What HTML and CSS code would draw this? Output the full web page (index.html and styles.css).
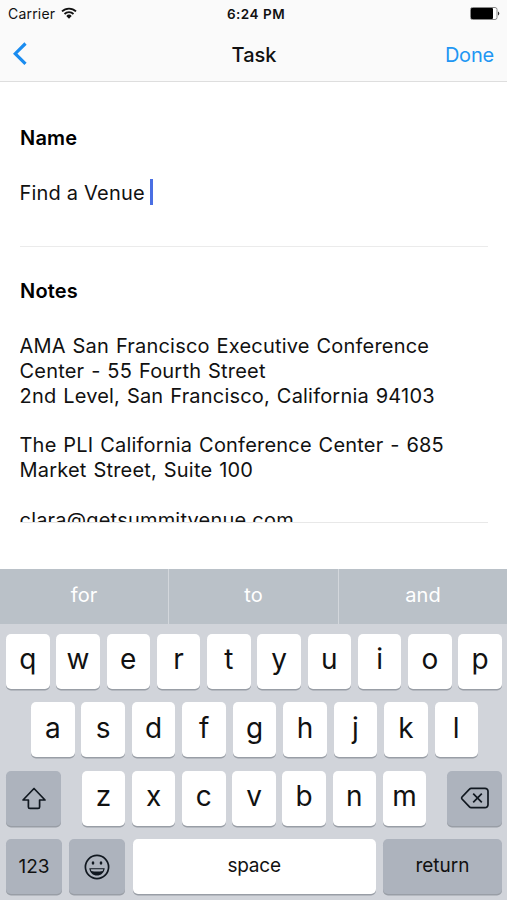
FILE: index.html
```html
<!DOCTYPE html>
<html lang="en">
<head>
  <meta charset="UTF-8">
  <title>Task</title>
  <meta name="viewport" content="width=device-width, initial-scale=1.0">
  <link rel="stylesheet" href="styles.css">
</head>
<body>
  <header>
    <div class="status">
      <div class="carrier">
        <span>Carrier</span>
        <svg class="wifi" viewBox="0 0 16 12" width="16" height="12">
          <path d="M1 4.4a10 10 0 0 1 14 0M3.5 7a6.4 6.4 0 0 1 9 0" fill="none" stroke="#111" stroke-width="1.8"/>
          <path d="M5.3 8.9a3.9 3.9 0 0 1 5.4 0L8 11.7z" fill="#111"/>
        </svg>
      </div>
      <div class="time">6:24 PM</div>
      <svg class="battery" viewBox="0 0 30 13" width="30" height="13">
        <rect x="0.5" y="0.5" width="26.5" height="12" rx="2" fill="#fff" stroke="#888"/>
        <rect x="1" y="1" width="22" height="11" rx="1" fill="#000"/>
        <path d="M28 4.5a2.2 2.2 0 0 1 0 4z" fill="#333"/>
      </svg>
    </div>
    <nav>
      <svg class="back" viewBox="0 0 14 24" width="14" height="24">
        <path d="M12.5 1.5L2.2 11.7l10.3 10.2" fill="none" stroke="#1a8cf0" stroke-width="3.2"/>
      </svg>
      <h1>Task</h1>
      <a class="done">Done</a>
    </nav>
  </header>

  <main>
    <section class="name">
      <h2>Name</h2>
      <p class="field"><span>Find a Venue</span><span class="caret"></span></p>
    </section>
    <section class="notes">
      <h2>Notes</h2>
      <div class="text">AMA San Francisco Executive Conference<br>Center - 55 Fourth Street<br>2nd Level, San Francisco, California 94103<br><br>The PLI California Conference Center - 685<br>Market Street, Suite 100<br><br>clara@getsummitvenue.com</div>
    </section>
  </main>

  <div class="keyboard">
    <div class="suggestions">
      <span>for</span><span>to</span><span>and</span>
    </div>
    <div class="keys">
      <div class="row">
        <b>q</b><b>w</b><b>e</b><b>r</b><b>t</b><b>y</b><b>u</b><b>i</b><b>o</b><b>p</b>
      </div>
      <div class="row middle">
        <b>a</b><b>s</b><b>d</b><b>f</b><b>g</b><b>h</b><b>j</b><b>k</b><b>l</b>
      </div>
      <div class="row">
        <b class="dark shift">
          <svg viewBox="0 0 26 24" width="26" height="24">
            <path d="M13 2.5L2 14h5.4v6.9q0 1.5 1.5 1.5h8.2q1.5 0 1.5-1.5V14H24z" fill="none" stroke="#111820" stroke-width="1.7" stroke-linejoin="round"/>
          </svg>
        </b>
        <b>z</b><b>x</b><b>c</b><b>v</b><b>b</b><b>n</b><b>m</b>
        <b class="dark delete">
          <svg viewBox="0 0 30 22" width="30" height="22">
            <path d="M11.2 1.3h13.8a3 3 0 0 1 3 3v13.4a3 3 0 0 1-3 3H11.2q-1 0-1.7-.8L2 12q-.8-1 0-2l7.5-7.9q.7-.8 1.7-.8z" fill="none" stroke="#111820" stroke-width="1.7"/>
            <path d="M13.2 6.7l8.6 8.6M21.8 6.7l-8.6 8.6" stroke="#111820" stroke-width="1.7"/>
          </svg>
        </b>
      </div>
      <div class="row bottom">
        <b class="dark numbers">123</b>
        <b class="dark emoji">
          <svg viewBox="0 0 26 26" width="26" height="26">
            <circle cx="13" cy="13" r="11.6" fill="none" stroke="#111820" stroke-width="1.7"/>
            <ellipse cx="9" cy="9" rx="1.3" ry="1.7" fill="#111820"/>
            <ellipse cx="17" cy="9" rx="1.3" ry="1.7" fill="#111820"/>
            <path d="M5.3 14.2h15.4c-.5 4.5-3.700 7.300-7.700 7.300s-7.200-2.800-7.700-7.300z" fill="#111820"/>
            <path d="M6.7 15.3h12.600l-.6 1.700q-5.700 1.200-11.400 0z" fill="#aeb4be"/>
          </svg>
        </b>
        <b class="space">space</b>
        <b class="dark return">return</b>
      </div>
    </div>
  </div>
</body>
</html>
```

FILE: styles.css
```css
html, body {
  margin: 0;
  padding: 0;
  height: 900px;
  overflow: hidden;
  background: #fff;
  color: #111;
  font-family: Inter, "Liberation Sans", sans-serif;
}
body {
  display: flex;
  flex-direction: column;
}
header {
  box-sizing: border-box;
  height: 82px;
  background: #fafafa;
  border-bottom: 1px solid #dedede;
}
.status {
  display: grid;
  grid-template-columns: 1fr auto 1fr;
  align-items: center;
  height: 27px;
  padding: 0 7px 0 8px;
  font-size: 14px;
}
.carrier {
  display: flex;
  align-items: center;
  gap: 6px;
  letter-spacing: 0.2px;
}
.wifi {
  margin-top: -2px;
}
.time {
  padding-left: 4px;
  font-size: 13.5px;
  font-weight: 600;
  letter-spacing: 0.5px;
}
.battery {
  justify-self: end;
}
nav {
  display: grid;
  grid-template-columns: 1fr auto 1fr;
  align-items: center;
  height: 54px;
  padding: 0 13px;
}
.back {
  margin-top: -1px;
}
h1 {
  margin: 2px 0 0 1px;
  font-size: 20px;
  font-weight: 500;
}
.done {
  justify-self: end;
  margin-top: 2px;
  color: #2196f3;
  font-size: 20px;
  letter-spacing: -0.2px;
}
main {
  height: 487px;
  padding: 0 19px 0 20px;
}
h2 {
  margin: 0;
  font-size: 20px;
  line-height: 24px;
  font-weight: 600;
  letter-spacing: 0.2px;
  color: #000;
}
.name {
  box-sizing: border-box;
  height: 165px;
  padding-top: 44px;
  border-bottom: 1px solid #ebebeb;
}
.field {
  display: flex;
  align-items: center;
  height: 26px;
  margin: 29px 0 0 -0.5px;
  font-size: 20px;
  line-height: 24px;
  letter-spacing: 0.2px;
}
.field span:first-child {
  padding-top: 2px;
}
.caret {
  width: 3px;
  height: 26px;
  margin-left: 5px;
  background: #4a6fe3;
}
.notes {
  box-sizing: border-box;
  height: 276px;
  padding-top: 32px;
  border-bottom: 1px solid #e8e8e8;
}
.text {
  height: 188px;
  margin: 31px 0 0 -0.5px;
  overflow: hidden;
  font-size: 20px;
  line-height: 24.8px;
  letter-spacing: 0.2px;
  word-spacing: 1px;
  white-space: nowrap;
}
.keyboard {
  height: 331px;
  background: #d1d4da;
}
.suggestions {
  display: grid;
  grid-template-columns: 168px 169px 1fr;
  gap: 1px;
  height: 55px;
  background: #d3d7dc;
}
.suggestions span {
  display: flex;
  align-items: center;
  justify-content: center;
  padding-bottom: 3px;
  background: #bac1c8;
  color: #fff;
  font-size: 20px;
}
.keys {
  display: flex;
  flex-direction: column;
  gap: 13.5px;
  padding: 9.5px 5px 0 6px;
}
.row {
  display: flex;
  justify-content: space-between;
  height: 55px;
}
.middle {
  padding: 0 24px 0 25px;
}
.row b {
  box-sizing: border-box;
  display: flex;
  align-items: center;
  justify-content: center;
  width: 43.5px;
  padding-bottom: 4px;
  border-radius: 5px;
  background: #fff;
  box-shadow: 0 1.5px 0 #999ea6;
  font-size: 28px;
  font-weight: 400;
}
.row .dark {
  width: 55px;
  padding: 0;
  background: #adb3bd;
}
.shift {
  margin-right: 14px;
}
.delete {
  margin-left: 14px;
}
.bottom b {
  font-size: 19px;
}
.row .numbers {
  width: 56px;
}
.row .emoji {
  width: 56px;
}
.row .space {
  width: 243px;
  padding-bottom: 2px;
  letter-spacing: -0.2px;
}
.row .return {
  width: 119px;
  padding-bottom: 2px;
}
```
